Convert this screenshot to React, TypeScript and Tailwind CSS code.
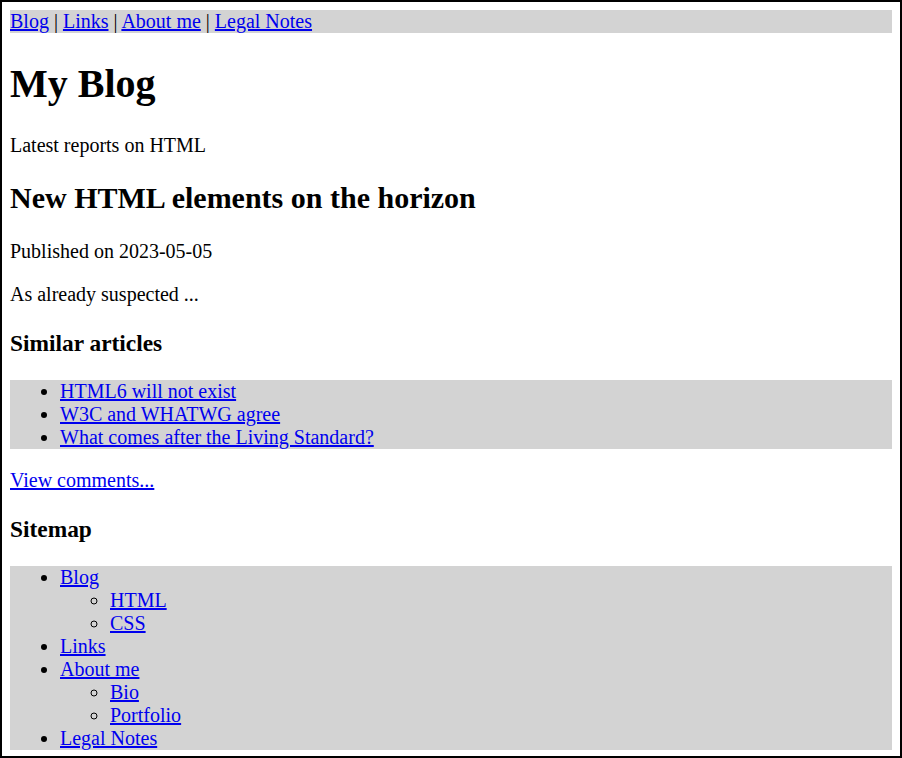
import React from "react";

const A = ({ children }: { children: React.ReactNode }) => (
  <a href="#" className="text-[#0000ee] underline">
    {children}
  </a>
);

export default function App() {
  return (
    <div
      className="w-[902px] h-[758px] box-border border-2 border-black overflow-hidden p-2 bg-white text-black text-[20px] leading-[normal]"
      style={{ fontFamily: '"Liberation Serif", "Times New Roman", serif' }}
    >
      <div className="bg-[#d3d3d3]">
        <A>Blog</A> | <A>Links</A> | <A>About me</A> | <A>Legal Notes</A>
      </div>
      <h1 className="text-[40px] font-bold my-[26.8px] leading-[normal]">My Blog</h1>
      <p className="my-[20px]">Latest reports on HTML</p>
      <h2 className="text-[30px] font-bold my-[24.9px] leading-[normal]">
        New HTML elements on the horizon
      </h2>
      <p className="my-[20px]">Published on 2023-05-05</p>
      <p className="my-[20px]">As already suspected ...</p>
      <h3 className="text-[23.4px] font-bold my-[23.4px] leading-[normal]">Similar articles</h3>
      <ul className="bg-[#d3d3d3] list-disc pl-[50px] my-[20px]">
        <li><A>HTML6 will not exist</A></li>
        <li><A>W3C and WHATWG agree</A></li>
        <li><A>What comes after the Living Standard?</A></li>
      </ul>
      <p className="my-[20px]"><A>View comments...</A></p>
      <h3 className="text-[23.4px] font-bold my-[23.4px] leading-[normal]">Sitemap</h3>
      <ul className="bg-[#d3d3d3] list-disc pl-[50px] my-[20px]">
        <li>
          <A>Blog</A>
          <ul className="list-[circle] pl-[50px]">
            <li><A>HTML</A></li>
            <li><A>CSS</A></li>
          </ul>
        </li>
        <li><A>Links</A></li>
        <li>
          <A>About me</A>
          <ul className="list-[circle] pl-[50px]">
            <li><A>Bio</A></li>
            <li><A>Portfolio</A></li>
          </ul>
        </li>
        <li><A>Legal Notes</A></li>
      </ul>
    </div>
  );
}
